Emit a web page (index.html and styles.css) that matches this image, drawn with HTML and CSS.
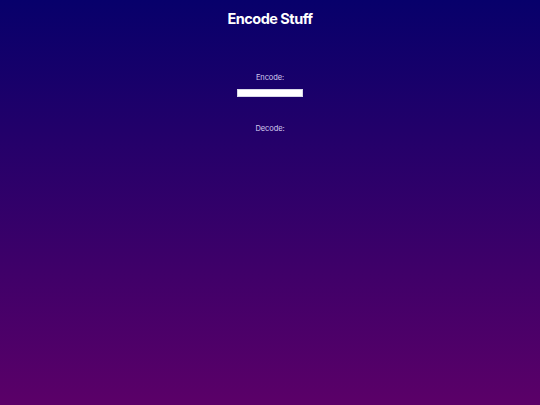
FILE: index.html
```html
<!DOCTYPE html>
<html>
<head>
<meta charset="utf-8">
<link rel="stylesheet" href="styles.css">
</head>
<body>
<main class="page">
  <h1 class="title">Encode Stuff</h1>
  <section class="block encode">
    <label class="label">Encode:</label>
    <input class="field" type="text">
  </section>
  <section class="block decode">
    <label class="label">Decode:</label>
  </section>
</main>
</body>
</html>
```
FILE: styles.css
```css
html, body {
  margin: 0;
  padding: 0;
  height: 100%;
}
body {
  background: linear-gradient(to bottom, #07006b 0%, #5b0068 100%);
  font-family: Inter, "Noto Sans", sans-serif;
  color: #fff;
}
.page {
  display: flex;
  flex-direction: column;
  align-items: center;
}
.title {
  margin: 9px 0 0 0;
  font-size: 14.5px;
  font-weight: 700;
  letter-spacing: -0.5px;
  line-height: 19px;
}
.block {
  display: flex;
  flex-direction: column;
  align-items: center;
}
.encode {
  margin-top: 45px;
}
.decode {
  margin-top: 27px;
}
.label {
  font-size: 7.5px;
  line-height: 10px;
  letter-spacing: -0.1px;
  color: #d4ccf0;
}
.field {
  margin-top: 6px;
  width: 66px;
  height: 8px;
  box-sizing: border-box;
  border: 1px solid #d8d8e8;
  background: #fff;
  padding: 0;
  outline: none;
}
```
